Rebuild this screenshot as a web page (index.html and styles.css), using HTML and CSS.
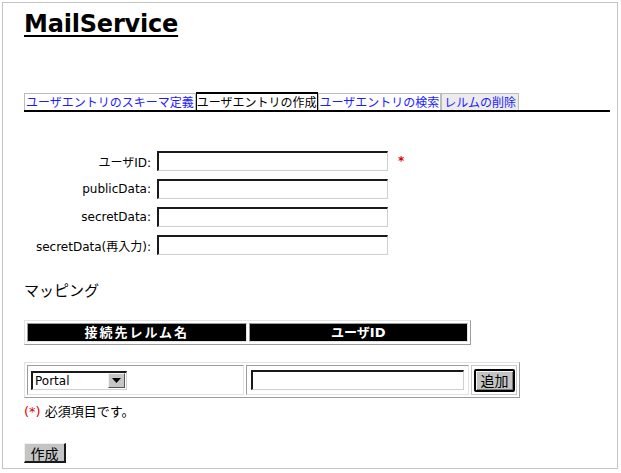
FILE: index.html
```html
<!DOCTYPE html>
<html lang="ja">
<head>
<meta charset="utf-8">
<title>MailService</title>
<link rel="stylesheet" href="styles.css">
</head>
<body>
<div class="frame">
  <h1 class="title">MailService</h1>
  <div class="tabs">
    <a class="tab" href="#">ユーザエントリのスキーマ定義</a>
    <span class="tab active">ユーザエントリの作成</span>
    <a class="tab" href="#">ユーザエントリの検索</a>
    <a class="tab last" href="#">レルムの削除</a>
  </div>
  <div class="form">
    <label class="lbl">ユーザID:</label><input class="field" type="text"><span class="req star">*</span>
    <label class="lbl">publicData:</label><input class="field" type="text"><span></span>
    <label class="lbl">secretData:</label><input class="field" type="password"><span></span>
    <label class="lbl">secretData(再入力):</label><input class="field" type="password"><span></span>
  </div>
  <h2 class="section">マッピング</h2>
  <table class="head">
    <tr><th class="spaced">接続先レルム名</th><th>ユーザID</th></tr>
  </table>
  <table class="map">
    <tr>
      <td class="c1">
        <div class="select"><span class="sel-text">Portal</span><span class="arrow"><svg width="9" height="5" viewBox="0 0 9 5"><path d="M0 0H9L4.5 5Z" fill="#000"/></svg></span></div>
      </td>
      <td class="c2"><input class="field wide" type="text"></td>
      <td class="c3"><button class="btn add" type="button">追加</button></td>
    </tr>
  </table>
  <p class="note"><span class="req">(*)</span> 必須項目です。</p>
  <button class="btn create" type="button">作成</button>
</div>
</body>
</html>
```

FILE: styles.css
```css
html, body {
  margin: 0;
  padding: 0;
  background: #fff;
}
body {
  font-family: "DejaVu Sans", "Noto Sans CJK JP", sans-serif;
  font-size: 12px;
  color: #000;
}
.frame {
  box-sizing: border-box;
  margin: 2px 3px 0 2px;
  width: 616px;
  height: 467px;
  border: 1px solid #c4c4c4;
  padding: 7px 0 0 21px;
}
.title {
  margin: 0;
  font: bold 24px/28px "DejaVu Sans", sans-serif;
  letter-spacing: -0.2px;
  text-decoration: underline;
  text-decoration-thickness: 2px;
  text-underline-offset: 3px;
}
.tabs {
  margin-top: 54px;
  width: 586px;
  display: flex;
  align-items: flex-end;
  border-bottom: 2px solid #000;
}
.tab {
  font: 12px/16px "Noto Sans CJK JP", sans-serif;
  color: #1c1cff;
  text-decoration: none;
  background: #fff;
  border: 1px solid #bcbcbc;
  border-bottom: 0;
  padding: 0 1px;
}
.tab.active {
  color: #000;
  border-color: #000;
  border-top-width: 2px;
  padding: 0;
}
.tab.last {
  background: #ececec;
  padding: 0 2px;
}
.form {
  margin-top: 39px;
  display: grid;
  grid-template-columns: 127px 231px auto;
  column-gap: 6px;
  row-gap: 8px;
  align-items: center;
}
.lbl {
  text-align: right;
  font-size: 12px;
  white-space: nowrap;
}
.field {
  box-sizing: border-box;
  width: 231px;
  height: 20px;
  margin: 0;
  padding: 0 2px;
  background: #fff;
  border-style: solid;
  border-width: 2px 1px 1px 2px;
  border-color: #1a1a1a #cfcfcf #cfcfcf #1a1a1a;
  outline: none;
}
.req {
  color: #e00000;
}
.star {
  margin-left: 4px;
  font-weight: bold;
  font-size: 12px;
}
.section {
  margin: 25px 0 0;
  font: normal 15px/20px "Noto Sans CJK JP", sans-serif;
}
.head {
  margin-top: 20px;
  width: 447px;
  table-layout: fixed;
  border-collapse: separate;
  border-spacing: 2px;
  border: 1px solid;
  border-color: #e2e2e2 #9c9c9c #9c9c9c #e2e2e2;
}
.head th {
  background: #000;
  color: #fff;
  font: bold 13px/15px "DejaVu Sans", "Noto Sans CJK JP", sans-serif;
  padding: 1px;
  border: 1px solid;
  border-color: #9c9c9c #e2e2e2 #e2e2e2 #9c9c9c;
  text-align: center;
}
.head th.spaced {
  letter-spacing: 2px;
}
.map {
  margin-top: 17px;
  table-layout: fixed;
  border-collapse: separate;
  border-spacing: 2px;
  border: 1px solid;
  border-color: #e2e2e2 #9c9c9c #9c9c9c #e2e2e2;
}
.map td {
  box-sizing: border-box;
  height: 30px;
  border: 1px solid;
  border-color: #9c9c9c #e2e2e2 #e2e2e2 #9c9c9c;
  vertical-align: middle;
  padding: 0 3px;
}
.map td.c1 { width: 217px; }
.map td.c2 { width: 222px; padding: 0 4px; }
.map td.c3 { width: 46px; padding: 0 1px 0 2px; border-color: #c8c8c8; }
.select {
  box-sizing: border-box;
  width: 96px;
  height: 19px;
  display: flex;
  align-items: center;
  border-style: solid;
  border-width: 2px 1px 1px 2px;
  border-color: #1a1a1a #cfcfcf #cfcfcf #1a1a1a;
  background: #fff;
}
.sel-text {
  flex: 1;
  padding-left: 2px;
  font-size: 12px;
  line-height: 14px;
}
.arrow {
  box-sizing: border-box;
  width: 17px;
  height: 15px;
  margin-right: 1px;
  background: #c6c6c6;
  border: 1px solid;
  border-color: #f4f4f4 #555 #555 #f4f4f4;
  display: flex;
  align-items: center;
  justify-content: center;
}
.arrow svg { display: block; }
.field.wide {
  width: 213px;
}
.btn {
  font: 14px/16px "Noto Sans CJK JP", sans-serif;
  color: #000;
  background: #c4c4c4;
  margin: 0;
  cursor: default;
}
.add {
  box-sizing: border-box;
  width: 41px;
  height: 23px;
  padding: 0;
  border: 2px solid #000;
  border-radius: 2px;
  box-shadow: inset 1px 1px #f4f4f4, inset -1px -1px #7a7a7a;
}
.note {
  margin: 6px 0 0;
  font-size: 13px;
  line-height: 16px;
}
.create {
  display: block;
  box-sizing: border-box;
  margin-top: 23px;
  width: 42px;
  height: 20px;
  padding: 0;
  border-style: solid;
  border-width: 1px 2px 2px 1px;
  border-color: #f0f0f0 #1a1a1a #1a1a1a #f0f0f0;
}
```
